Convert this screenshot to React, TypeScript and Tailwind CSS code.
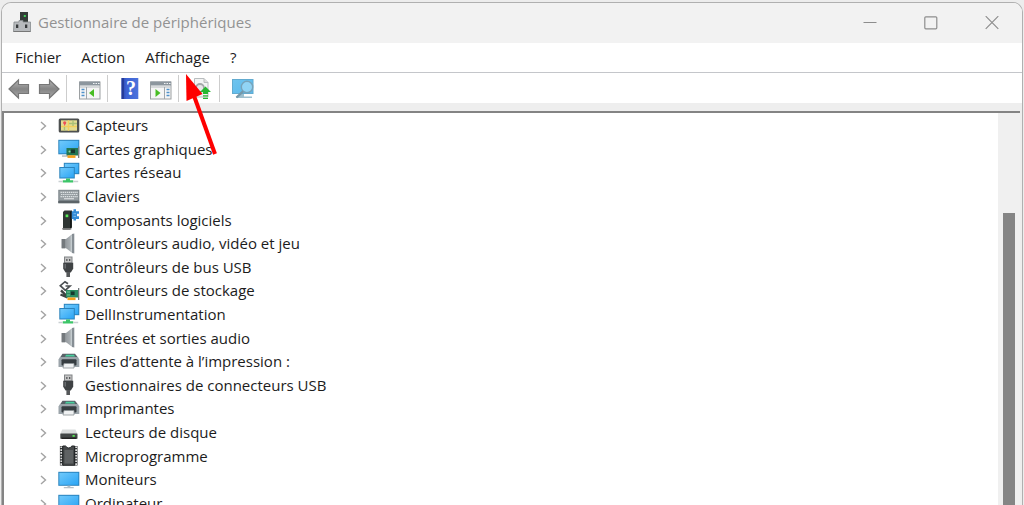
import type { ReactNode } from "react";

function MapIcon() {
  return (
    <>
      <rect x="0.7" y="3.5" width="20.6" height="14" rx="1.5" fill="#4d5050" />
      <rect x="3" y="5.3" width="16" height="10.4" fill="#e3dc93" />
      <path d="M3 11.5 H19 M10.5 5.3 V15.7" stroke="#f2cf5c" strokeWidth="1.4" fill="none" />
      <path d="M15 5.3 V11 M11 8.5 H19 M6.5 12 V15.7" stroke="#a9c077" strokeWidth="1.4" fill="none" />
      <circle cx="6.7" cy="7.8" r="1.6" fill="#ee4f58" />
      <path d="M6 9 h1.4 l-.7 2.6z" fill="#ee4f58" />
    </>
  );
}

function Screen({ x, y, w, h }: { x: number; y: number; w: number; h: number }) {
  return (
    <>
      <rect x={x} y={y} width={w} height={h} fill="#2a83bd" />
      <rect x={x + 1} y={y + 1} width={w - 2} height={h - 2} fill="url(#screenFill)" />
    </>
  );
}

function GraphicsIcon() {
  return (
    <>
      <Screen x={0.3} y={1.8} w={21} h={14.5} />
      <rect x="4" y="17.3" width="6" height="1.5" fill="#b3bbc1" />
      <rect x="8.5" y="10" width="11.5" height="7.5" fill="#227653" />
      <rect x="20" y="8.5" width="1.3" height="11.5" fill="#7a7f83" />
      <rect x="13" y="11.5" width="4" height="3.6" fill="#17362d" />
      <circle cx="11.5" cy="13.5" r="1" fill="#8bd39f" />
      <rect x="9.5" y="17.3" width="8" height="2.6" fill="#f5a01c" />
    </>
  );
}

function NetworkIcon() {
  return (
    <>
      <Screen x={5.8} y={0.8} w={15.5} h={11.4} />
      <Screen x={1.3} y={5} w={15.5} h={11.5} />
      <path d="M8 16.5 h4 v1.7 h3.2 v2.4 H4.8 v-2.4 H8z" fill="#3cc568" />
      <path d="M.5 18.7 h4.3 v1.6 H.5z M15.2 18.7 h5 v1.6 h-5z" fill="#c9d0d2" />
    </>
  );
}

function KeyboardIcon() {
  return (
    <>
      <rect x="0.3" y="3.8" width="21" height="13.4" fill="#788086" />
      <rect x="1.2" y="4.5" width="19.2" height="9.6" fill="#969da1" />
      <path d="M2.5 6.3 H20 M3 8.5 H20 M2.5 10.7 H20" stroke="#dde2e4" strokeWidth="1.2" strokeDasharray="1.4 .7" />
      <path d="M6 12.8 H16" stroke="#e6e9ea" strokeWidth="1.1" />
      <rect x="0.3" y="15" width="21" height="2.2" fill="#5c6468" />
    </>
  );
}

function SoftwareIcon() {
  return (
    <>
      <path d="M5 3 L6.5 1.5 H13.8 V18.5 L12 20.5 H5z" fill="#303634" />
      <path d="M12 3 L13.8 1.5 V18 L12 20z" fill="#141817" />
      <rect x="7.6" y="5.5" width="2.7" height="2.7" fill="#57eb58" />
      <rect x="4.3" y="19" width="9" height="1.6" fill="#777" />
      <path d="M13 2.2 H15.5 V.3 H18 V2.2 H21 V4.8 H19 V7.2 H21 V10 H18 V11.5 H15.5 V10 H13.8 V2.2z" fill="#338bd6" />
      <path d="M15.5 4.7 h2.5 M15.5 7.4 h2.5" stroke="#75b9ef" strokeWidth="1" />
    </>
  );
}

function SpeakerIcon() {
  return (
    <>
      <path d="M3.7 6 H8 L14.7 0.8 V20.3 L8 15.2 H3.7z" fill="url(#metalFill)" />
      <path d="M3.7 6 h3.4 v9.2 H3.7z" fill="#74797d" />
      <path d="M14 1 L16.3 .4 V20.6 L14 20z" fill="#868e94" />
      <path d="M13.3 2.5 V18.5" stroke="#c7ced2" strokeWidth="1.2" />
    </>
  );
}

function UsbIcon() {
  return (
    <>
      <rect x="6.5" y="1" width="7.5" height="6" fill="#c4c4c4" stroke="#808385" />
      <path d="M8.2 3 h1.3 v2 H8.2z M11 3 h1.3 v2 H11z" fill="#55585a" />
      <path d="M5.2 6.7 H15.2 V12.8 L12.8 16.5 H7.6 L5.2 12.8z" fill="#3f4244" />
      <rect x="8.4" y="16" width="3.6" height="5" fill="#55585a" />
      <path d="M7.2 8 v4.5" stroke="#74787b" strokeWidth="1.2" />
    </>
  );
}

function StorageIcon() {
  return (
    <>
      <path d="M7.5 6 H12 L7.3 10.3 L2.3 5.7 L7 1.7 L10 3.8" fill="none" stroke="#4c5053" strokeWidth="1.7" />
      <path d="M3 10.3 L9 16.3 M2.5 14.5 L9.5 17.5" stroke="#3d4443" strokeWidth="2.4" fill="none" />
      <rect x="8" y="10" width="12" height="7.5" fill="#2b8b61" />
      <rect x="20" y="8" width="1.3" height="12" fill="#73787b" />
      <rect x="12.8" y="11.5" width="3.8" height="3.5" fill="#16382d" />
      <path d="M9 12 h3 M9 15 h3" stroke="#77c79a" />
      <rect x="9.5" y="17.5" width="8" height="2.6" fill="#f5a01c" />
    </>
  );
}

function PrinterIcon() {
  return (
    <>
      <path d="M4.5 2.8 H17 L20 6.5 H2z" fill="#596168" />
      <path d="M8 3.8 h8 l1 1.8 H7z" fill="#48cf9e" />
      <path d="M2 6 H20 L21.3 8.5 V16 H.5 V8.5z" fill="#9ba4aa" />
      <rect x="3.5" y="8.2" width="15" height="6.3" rx="1" fill="#363d41" />
      <path d="M6 12.5 H16 V17 H5z" fill="#eff1f2" stroke="#8b9295" strokeWidth=".8" />
    </>
  );
}

function DriveIcon() {
  return (
    <>
      <path d="M4.2 8.5 H17.5 L19.4 13 H2.3z" fill="#dadddd" />
      <rect x="2.3" y="12.5" width="17.2" height="5.3" rx=".6" fill="#434848" />
      <rect x="3.5" y="16.5" width="15" height="1.5" fill="#222" />
      <rect x="14.5" y="14" width="2.3" height="1.8" fill="#56e553" />
    </>
  );
}

function ChipIcon() {
  return (
    <>
      <path d="M3.6 1 V20.5 M17.8 1 V20.5" stroke="#303334" strokeWidth="3.4" />
      <path d="M3.3 1.5 V20 M18.1 1.5 V20" stroke="#e0e0e0" strokeWidth="1.8" strokeDasharray="1.6 1.2" />
      <path d="M4.8 1 H7.5 q3.2 4 6.4 0 H16.6 V20.3 H4.8z" fill="#46494a" stroke="#222526" />
      <path d="M6.5 5 H15 V18.5 H6.5z" fill="#5f6263" />
    </>
  );
}

function MonitorIcon() {
  return (
    <>
      <Screen x={0.3} y={2.8} w={21} h={14} />
      <path d="M9.5 16.8 h2.8 v1.2 h3.4 v1.2 H5.8 v-1.2 h3.7z" fill="#b6c0c6" />
    </>
  );
}

const categories: { label: string; icon: ReactNode }[] = [
  { label: "Capteurs", icon: <MapIcon /> },
  { label: "Cartes graphiques", icon: <GraphicsIcon /> },
  { label: "Cartes réseau", icon: <NetworkIcon /> },
  { label: "Claviers", icon: <KeyboardIcon /> },
  { label: "Composants logiciels", icon: <SoftwareIcon /> },
  { label: "Contrôleurs audio, vidéo et jeu", icon: <SpeakerIcon /> },
  { label: "Contrôleurs de bus USB", icon: <UsbIcon /> },
  { label: "Contrôleurs de stockage", icon: <StorageIcon /> },
  { label: "DellInstrumentation", icon: <NetworkIcon /> },
  { label: "Entrées et sorties audio", icon: <SpeakerIcon /> },
  { label: "Files d’attente à l’impression :", icon: <PrinterIcon /> },
  { label: "Gestionnaires de connecteurs USB", icon: <UsbIcon /> },
  { label: "Imprimantes", icon: <PrinterIcon /> },
  { label: "Lecteurs de disque", icon: <DriveIcon /> },
  { label: "Microprogramme", icon: <ChipIcon /> },
  { label: "Moniteurs", icon: <MonitorIcon /> },
  { label: "Ordinateur", icon: <MonitorIcon /> },
];

function SharedGradients() {
  return (
    <svg className="absolute size-0" aria-hidden="true">
      <defs>
        <linearGradient id="screenFill" x1="0" y1="0" x2="1" y2="1">
          <stop offset="0" stopColor="#70c9fb" />
          <stop offset="1" stopColor="#2ba5f5" />
        </linearGradient>
        <linearGradient id="paleScreenFill" x1="0" y1="0" x2="1" y2="1">
          <stop offset="0" stopColor="#6fc4ee" />
          <stop offset="1" stopColor="#5ab9ec" />
        </linearGradient>
        <linearGradient id="metalFill">
          <stop offset="0" stopColor="#84898d" />
          <stop offset="1" stopColor="#b4babe" />
        </linearGradient>
        <linearGradient id="arrowFill" x1="0" y1="0" x2="0" y2="1">
          <stop offset="0" stopColor="#b5b5b5" />
          <stop offset=".5" stopColor="#858585" />
          <stop offset="1" stopColor="#a8a8a8" />
        </linearGradient>
        <linearGradient id="helpFill">
          <stop offset="0" stopColor="#2943a8" />
          <stop offset=".3" stopColor="#3c62d3" />
          <stop offset="1" stopColor="#4c72dc" />
        </linearGradient>
      </defs>
    </svg>
  );
}

function ToolButton({ label, children }: { label: string; children: ReactNode }) {
  return (
    <button type="button" aria-label={label} className="block shrink-0 pt-[2px]">
      <svg viewBox="0 0 22 24" className="block h-6 w-[22px]" aria-hidden="true">
        {children}
      </svg>
    </button>
  );
}

function Separator() {
  return <div className="h-[27px] w-px shrink-0 bg-[#cdcdcd]" />;
}

function PaneFrame() {
  return (
    <>
      <rect x=".5" y="5" width="20.5" height="17" fill="#f6f6f6" stroke="#9ca0a2" />
      <rect x=".5" y="4.5" width="20.5" height="4" fill="#8c969e" />
      <path d="M14 6.5 h1.5 M16.5 6.5 h1.5 M19 6.5 h1.5" stroke="#f0f3f5" strokeWidth="1.2" />
      <path d="M1 10 h19.5" stroke="#b5bbc0" strokeWidth="1.2" />
    </>
  );
}

function Toolbar() {
  return (
    <div className="flex h-[30px] items-center bg-white pl-[6px]" role="toolbar" aria-label="Outils">
      <div className="flex gap-2 pr-[6px]">
        <ToolButton label="Précédent">
          <path d="M1 12 L10.5 3 V7.5 H20.5 V16.5 H10.5 V21z" fill="url(#arrowFill)" stroke="#777" strokeWidth="1.2" />
        </ToolButton>
        <ToolButton label="Suivant">
          <path d="M21 12 L11.5 3 V7.5 H1.5 V16.5 H11.5 V21z" fill="url(#arrowFill)" stroke="#777" strokeWidth="1.2" />
        </ToolButton>
      </div>
      <Separator />
      <div className="flex pr-[6px] pl-3">
        <ToolButton label="Afficher l’arborescence">
          <PaneFrame />
          <path d="M2.5 12.5 h3 M2.5 15.5 h3 M2.5 18.5 h3" stroke="#4f92cb" strokeWidth="1.6" />
          <path d="M7.5 10 V22" stroke="#a0a7ac" />
          <path d="M10 16 L15 12 V20z" fill="#48bd23" />
        </ToolButton>
      </div>
      <Separator />
      <div className="flex gap-2 pr-[6px] pl-3">
        <ToolButton label="Aide">
          <rect x="1.3" y="1" width="17" height="21" fill="url(#helpFill)" />
          <path d="M3 1 V22" stroke="#223791" strokeWidth="1.5" />
          <text x="11" y="18" textAnchor="middle" fontFamily="Liberation Serif, serif" fontSize="20" fontWeight="bold" fill="white">?</text>
        </ToolButton>
        <ToolButton label="Afficher le volet Actions">
          <PaneFrame />
          <path d="M14.5 10 V22" stroke="#a0a7ac" />
          <path d="M16.5 12.5 h3 M16.5 15.5 h3 M16.5 18.5 h3" stroke="#4f92cb" strokeWidth="1.6" />
          <path d="M10.5 16 L5.5 12 V20z" fill="#48bd23" />
        </ToolButton>
      </div>
      <Separator />
      <div className="flex pr-[6px] pl-3">
        <ToolButton label="Mettre à jour le pilote">
          <path d="M3.5 1.5 H13 L17 5.5 V20 H3.5z" fill="#f3f4f4" stroke="#b9bdbf" />
          <path d="M13 1.5 V5.5 H17" fill="#ddd" stroke="#b9bdbf" />
          <circle cx="9" cy="11" r="4" fill="#e6e6e6" stroke="#a3a7a9" strokeWidth="1.8" />
          <path d="M14.5 9.5 L20 15 H17 V17 H12 V15 H9z M12 18.3 h5 v1.3 h-5z M12 20.7 h5 v1.3 h-5z" fill="#26b82f" />
        </ToolButton>
      </div>
      <Separator />
      <div className="flex pl-3">
        <ToolButton label="Rechercher les modifications sur le matériel">
          <rect x=".5" y="2.5" width="20.5" height="14" fill="url(#paleScreenFill)" stroke="#62abd0" />
          <path d="M7 17 h5 v2.5 h8 V21 H4 v-1.5 H7z" fill="#9dbfce" />
          <circle cx="15" cy="10" r="5.7" fill="#9cdaf6" fillOpacity=".8" stroke="#77a3ba" strokeWidth="1.4" />
          <path d="M11 14.3 L4.5 20.5" stroke="#7698a9" strokeWidth="2.3" />
        </ToolButton>
      </div>
    </div>
  );
}

function TitleBar() {
  return (
    <header className="flex h-10 items-center bg-[#f2f2f2] pl-[11px] text-[#929292]">
      <svg viewBox="0 0 18 22" className="h-[22px] w-[18px]" aria-hidden="true">
        <rect x="7" y="0" width="8" height="11" fill="#343b38" />
        <rect x="10.8" y="3" width="2" height="2" fill="#3fd057" />
        <path d="M1 10 H6 V8.5 H10 V10 H17.5 V19.5 H.5z" fill="#b7babd" stroke="#878b8e" strokeWidth=".8" />
        <path d="M3 12.5 h2.3 v3.5 H3z M12 12.5 h2.3 v3.5 H12z" fill="#36393b" />
        <path d="M.5 19.5 H17.5" stroke="#777" />
      </svg>
      <h1 className="flex-1 pb-[2px] pl-[7px] text-[15px]">Gestionnaire de périphériques</h1>
      <div className="flex">
        <button type="button" aria-label="Réduire" className="grid h-10 w-[61px] place-items-center">
          <svg viewBox="0 0 14 14" className="size-[14px]" aria-hidden="true"><path d="M.5 6.5 H13.5" stroke="#8d8d8d" strokeWidth="1" /></svg>
        </button>
        <button type="button" aria-label="Agrandir" className="grid h-10 w-[61px] place-items-center">
          <svg viewBox="0 0 14 14" className="size-[14px]" aria-hidden="true"><rect x=".8" y=".8" width="12" height="12" rx="1" fill="none" stroke="#8d8d8d" strokeWidth="1.2" /></svg>
        </button>
        <button type="button" aria-label="Fermer" className="grid h-10 w-[61px] place-items-center">
          <svg viewBox="0 0 14 14" className="size-[14px]" aria-hidden="true"><path d="M.7.2 L13.3 12.8 M13.3.2 L.7 12.8" stroke="#8d8d8d" strokeWidth="1.2" /></svg>
        </button>
      </div>
    </header>
  );
}

export default function App() {
  return (
    <div className="relative h-screen overflow-hidden bg-[#ededed] pt-[2px] pr-px pl-px font-['Open_Sans','Noto_Sans',sans-serif] text-[15px] text-[#1c1c1c]">
      <SharedGradients />
      <div className="flex h-full flex-col overflow-hidden rounded-t-[10px] border border-b-0 border-[#b0b0b0] bg-[#eeeeee]">
        <TitleBar />
        <nav className="flex h-[29px] items-center gap-5 bg-white pl-[13px]" aria-label="Menus">
          <button type="button">Fichier</button>
          <button type="button">Action</button>
          <button type="button">Affichage</button>
          <button type="button">?</button>
        </nav>
        <div className="h-px shrink-0 bg-[#c4c6ca]" />
        <Toolbar />
        <main className="mt-[8px] mr-[2px] flex min-h-0 flex-1 overflow-hidden border-t-2 border-l-2 border-[#848484] bg-white">
          <ul role="tree" aria-label="Périphériques" className="mt-px grid min-h-[401px] flex-1 auto-rows-fr self-start pl-[35px] leading-[23px]">
            {categories.map(({ label, icon }) => (
              <li key={label} role="treeitem" aria-expanded="false" className="flex items-center">
                <button type="button" aria-label={`Développer ${label}`} className="block pt-px">
                  <svg viewBox="0 0 8 12" className="block h-3 w-2" aria-hidden="true">
                    <path d="M2 2 L6.5 6 L2 10" fill="none" stroke="#a3a3a3" strokeWidth="1.4" />
                  </svg>
                </button>
                <svg viewBox="0 0 22 22" className="ml-[11px] size-[22px]" aria-hidden="true">{icon}</svg>
                <span className="pl-[5px]">{label}</span>
              </li>
            ))}
          </ul>
          <div className="flex w-[22px] flex-col items-center bg-[#f0f0f0] pt-[100px]">
            <div className="w-3 flex-1 bg-[#858585]" />
          </div>
        </main>
      </div>
      <svg viewBox="0 0 36 86" className="pointer-events-none absolute top-[72px] left-[183px] h-[86px] w-9" aria-hidden="true">
        <path d="M10 21 L32 82" stroke="#fe0000" strokeWidth="4" />
        <path d="M3 2 L3.5 29 L19.5 22z" fill="#fe0000" />
      </svg>
    </div>
  );
}
